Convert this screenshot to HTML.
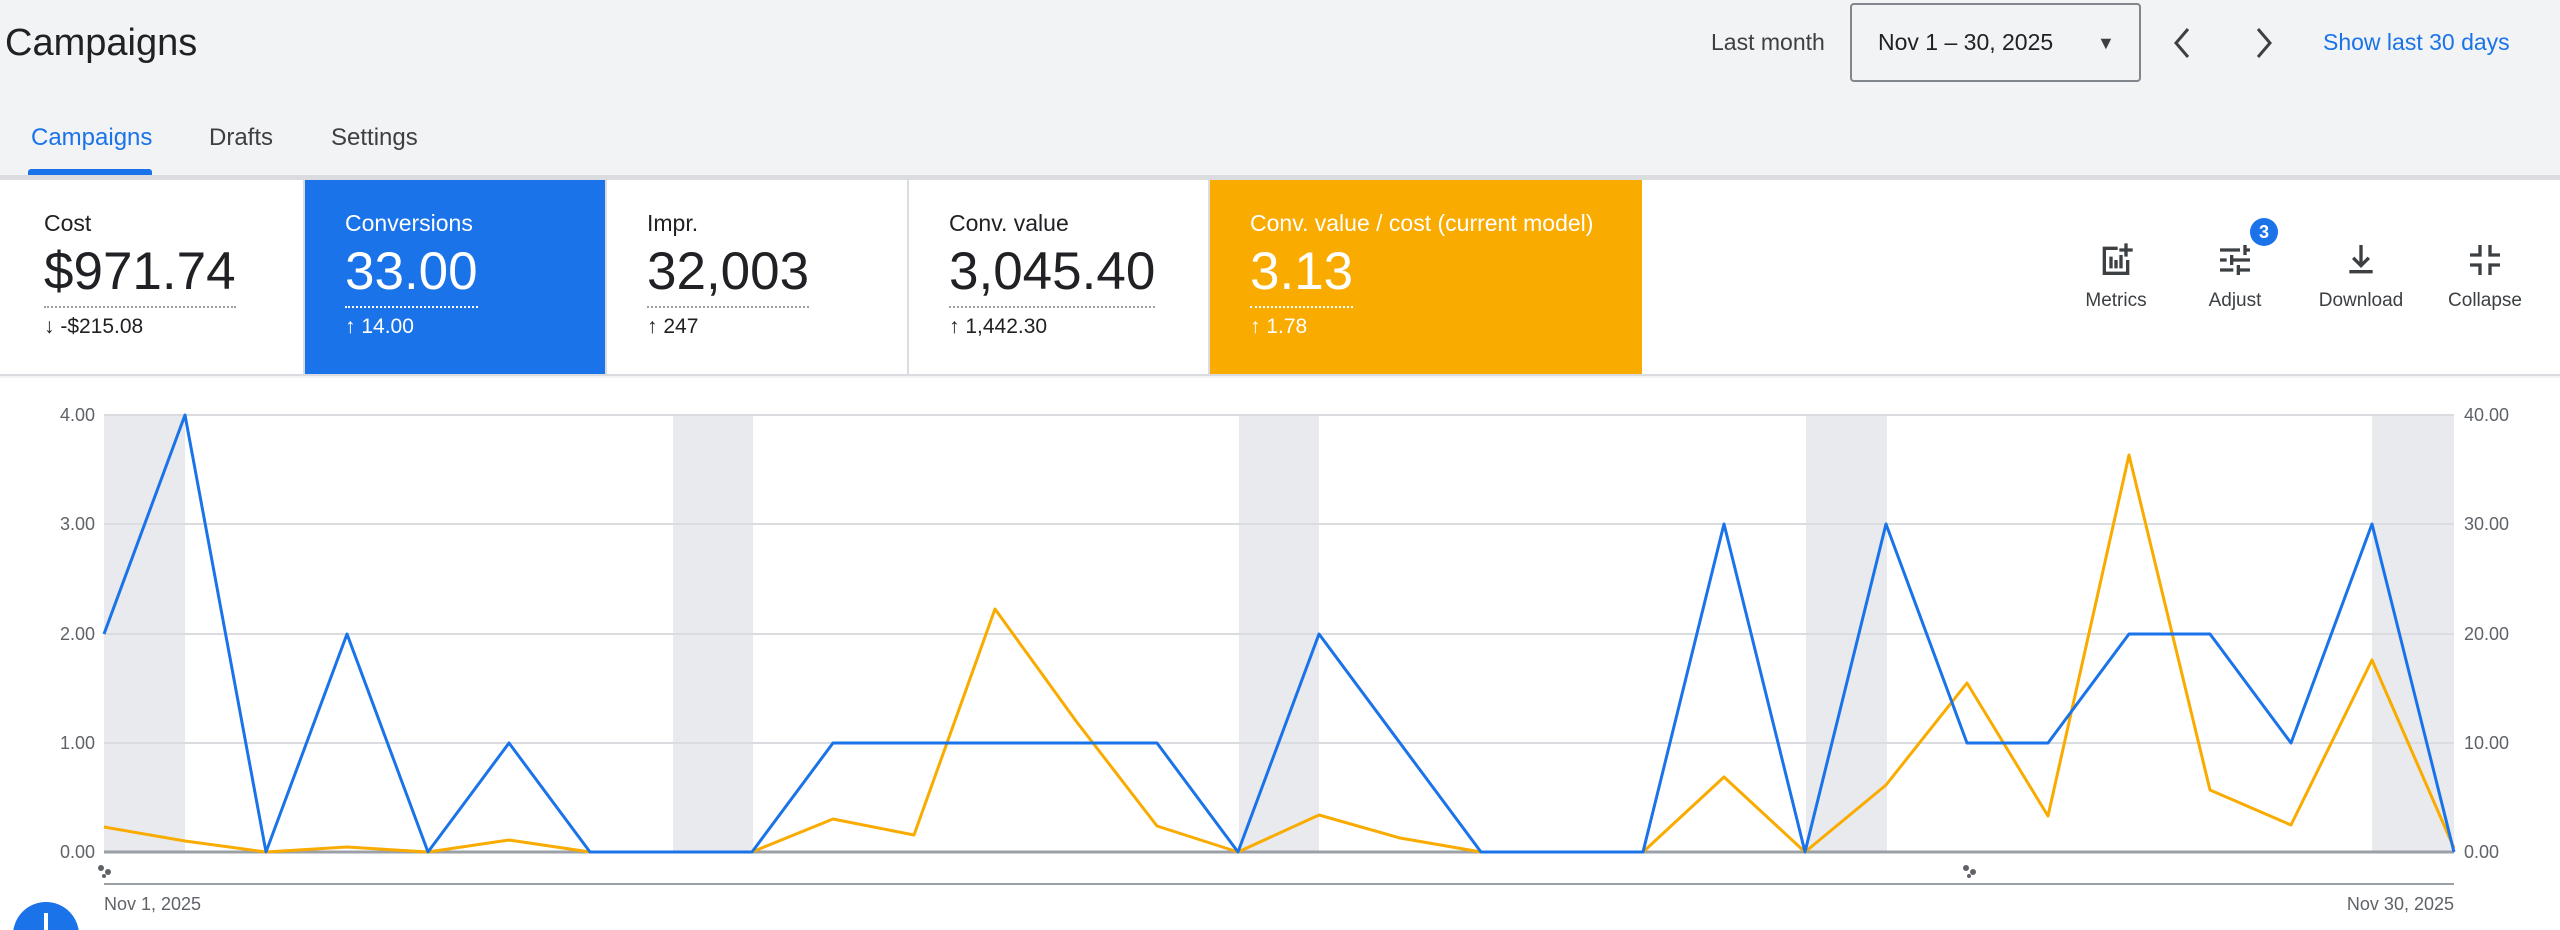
<!DOCTYPE html>
<html><head><meta charset="utf-8"><style>
*{margin:0;padding:0;box-sizing:border-box}
body{width:2560px;height:930px;background:#f1f3f4;font-family:"Liberation Sans",Arial,sans-serif;position:relative;overflow:hidden;color:#202124}
.a{position:absolute;white-space:nowrap}
.card{position:absolute;top:180px;height:194px;background:#fff;border-right:2px solid #dadce0}
.lbl{position:absolute;left:40px;top:30px;font-size:23px}
.val{position:absolute;left:40px;top:62px;font-size:53px;line-height:60px;padding-bottom:4px;border-bottom:2px dotted #9aa0a6}
.dl{position:absolute;left:40px;top:135px;font-size:21px}
.ic{position:absolute;top:240px;width:120px;text-align:center;font-size:19px;color:#3c4043}
.ic svg{display:block;margin:0 auto 10px}
</style></head><body>
<div class="a" style="left:5px;top:22px;font-size:38px">Campaigns</div>
<div class="a" style="left:1711px;top:29px;font-size:23px;color:#3c4043">Last month</div>
<div class="a" style="left:1850px;top:3px;width:291px;height:79px;border:2px solid #80868b;border-radius:4px"></div>
<div class="a" style="left:1878px;top:29px;font-size:23px">Nov 1 – 30, 2025</div>
<div class="a" style="left:2097px;top:33px;font-size:18px;color:#3c4043">▼</div>
<svg class="a" style="left:2168px;top:25px" width="30" height="36"><path d="M20 4 L8 18 L20 32" fill="none" stroke="#3c4043" stroke-width="3"/></svg>
<svg class="a" style="left:2248px;top:25px" width="30" height="36"><path d="M10 4 L22 18 L10 32" fill="none" stroke="#3c4043" stroke-width="3"/></svg>
<div class="a" style="left:2323px;top:29px;font-size:23px;color:#1a73e8">Show last 30 days</div>
<div class="a" style="left:31px;top:124px;font-size:24px;color:#1a73e8">Campaigns</div>
<div class="a" style="left:209px;top:124px;font-size:24px;color:#3c4043">Drafts</div>
<div class="a" style="left:331px;top:124px;font-size:24px;color:#3c4043">Settings</div>
<div class="a" style="left:28px;top:169px;width:124px;height:6px;background:#1a73e8;border-radius:3px 3px 0 0"></div>
<div class="a" style="left:0;top:175px;width:2560px;height:5px;background:#dadce0"></div>
<div class="a" style="left:0;top:180px;width:2560px;height:196px;background:#fff;border-bottom:2px solid #dadce0"></div>
<div class="card" style="left:0;width:305px"><div class="lbl" style="left:44px">Cost</div><div class="val" style="left:44px">$971.74</div><div class="dl" style="left:44px">↓ -$215.08</div></div>
<div class="card" style="left:305px;width:302px;background:#1a73e8;color:#fff"><div class="lbl">Conversions</div><div class="val" style="border-color:#fff">33.00</div><div class="dl">↑ 14.00</div></div>
<div class="card" style="left:607px;width:302px"><div class="lbl">Impr.</div><div class="val">32,003</div><div class="dl">↑ 247</div></div>
<div class="card" style="left:909px;width:301px"><div class="lbl">Conv. value</div><div class="val">3,045.40</div><div class="dl">↑ 1,442.30</div></div>
<div class="card" style="left:1210px;width:432px;background:#f9ab00;color:#fff;border:none"><div class="lbl">Conv. value / cost (current model)</div><div class="val" style="border-color:#fff">3.13</div><div class="dl">↑ 1.78</div></div>
<div class="ic" style="left:2056px"><svg width="40" height="40" viewBox="0 0 24 24"><path d="M4 4h9v2H6v13h12v-7h2v9H4z M8 10h2v7H8z M11 12h2v5h-2z M14 9h2v8h-2z M17 2h2v3h3v2h-3v3h-2V7h-3V5h3z" fill="#3c4043"/></svg>Metrics</div>
<div class="ic" style="left:2175px"><svg width="40" height="40" viewBox="0 0 24 24"><path d="M3 5h12v2H3zM17 3h2v6h-2zM19 5h2v2h-2zM3 11h4v2H3zM9 9h2v6H9zM11 11h10v2H11zM3 17h8v2H3zM13 15h2v6h-2zM15 17h6v2h-6z" fill="#3c4043"/></svg>Adjust</div>
<div class="a" style="left:2250px;top:218px;width:28px;height:28px;border-radius:50%;background:#1a73e8;color:#fff;font-size:18px;font-weight:bold;text-align:center;line-height:28px">3</div>
<div class="ic" style="left:2301px"><svg width="40" height="40" viewBox="0 0 24 24"><path d="M11 3h2v10l3-3 1.4 1.4L12 16.8 6.6 11.4 8 10l3 3zM5 18h14v2H5z" fill="#3c4043"/></svg>Download</div>
<div class="ic" style="left:2425px"><svg width="40" height="40" viewBox="0 0 24 24"><path d="M8 3h2v7H3V8h5zM14 3h2v5h5v2h-7zM3 14h7v7H8v-5H3zM14 14h7v2h-5v5h-2z" fill="#3c4043"/></svg>Collapse</div>
<div class="a" style="left:0;top:378px;width:2560px;height:552px;background:#fff"></div>
<svg class="a" style="left:0;top:0" width="2560" height="930">
<g fill="#e8eaed"><rect x="104" y="415" width="81" height="437"/><rect x="673" y="415" width="80" height="437"/><rect x="1239" y="415" width="80" height="437"/><rect x="1806" y="415" width="81" height="437"/><rect x="2372" y="415" width="82" height="437"/></g>
<g stroke="#dadce0" stroke-width="2"><line x1="104" y1="415" x2="2454" y2="415"/><line x1="104" y1="524" x2="2454" y2="524"/><line x1="104" y1="634" x2="2454" y2="634"/><line x1="104" y1="743" x2="2454" y2="743"/></g>
<line x1="104" y1="852" x2="2454" y2="852" stroke="#9aa0a6" stroke-width="3"/>
<line x1="104" y1="884" x2="2454" y2="884" stroke="#9aa0a6" stroke-width="2"/>
<g font-size="18" fill="#5f6368" font-family="Liberation Sans,sans-serif">
<text x="95" y="421" text-anchor="end">4.00</text><text x="95" y="530" text-anchor="end">3.00</text><text x="95" y="640" text-anchor="end">2.00</text><text x="95" y="749" text-anchor="end">1.00</text><text x="95" y="858" text-anchor="end">0.00</text>
<text x="2464" y="421">40.00</text><text x="2464" y="530">30.00</text><text x="2464" y="640">20.00</text><text x="2464" y="749">10.00</text><text x="2464" y="858">0.00</text>
<text x="104" y="910">Nov 1, 2025</text><text x="2454" y="910" text-anchor="end">Nov 30, 2025</text></g>
<g fill="#5f6368"><circle cx="101" cy="868" r="3"/><circle cx="108" cy="872" r="3"/><circle cx="104" cy="876" r="2"/><circle cx="1966" cy="868" r="3"/><circle cx="1973" cy="872" r="3"/><circle cx="1969" cy="876" r="2"/></g>
<polyline fill="none" stroke="#f9ab00" stroke-width="3" stroke-linejoin="round" points="104,827 185,841 266,852 347,847 428,852 509,840 590,852 671,852 752,852 833,819 914,835 995,609 1076,721 1157,826 1238,852 1319,815 1400,838 1481,852 1562,852 1643,852 1724,777 1805,852 1886,785 1967,683 2048,816 2129,455 2210,790 2291,825 2372,660 2454,848"/>
<polyline fill="none" stroke="#1a73e8" stroke-width="3" stroke-linejoin="round" points="104,634 185,415 266,852 347,634 428,852 509,743 590,852 671,852 752,852 833,743 914,743 995,743 1076,743 1157,743 1238,852 1319,634 1400,743 1481,852 1562,852 1643,852 1724,524 1805,852 1886,524 1967,743 2048,743 2129,634 2210,634 2291,743 2372,524 2454,852"/>
<circle cx="46" cy="935" r="33" fill="#1a73e8"/>
<rect x="44" y="913" width="4" height="17" fill="#fff"/>
</svg>
</body></html>
